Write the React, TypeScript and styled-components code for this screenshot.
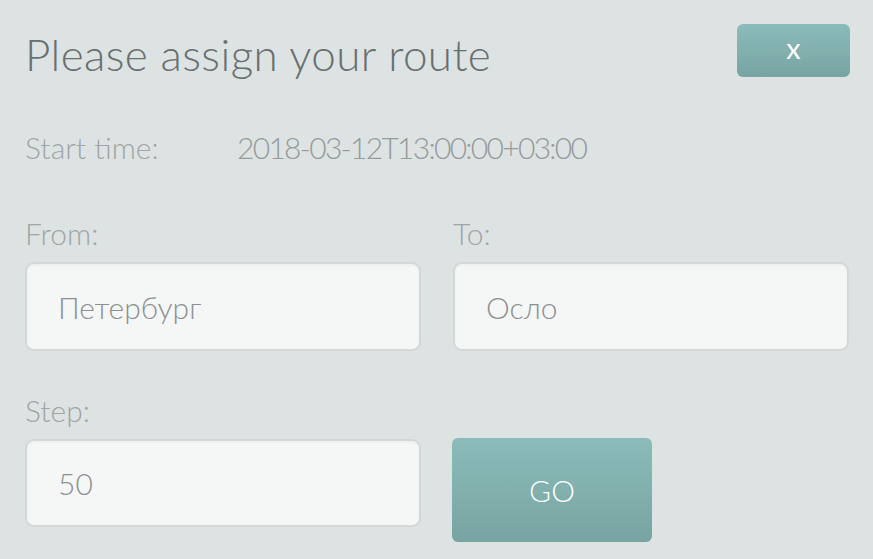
import React from "react";
import styled, { createGlobalStyle } from "styled-components";

const Global = createGlobalStyle`
  html, body {
    margin: 0;
    padding: 0;
    background: #dde3e3;
  }
  body {
    font-family: "Lato", "Open Sans", "Liberation Sans", sans-serif;
    font-weight: 300;
  }
`;

const Page = styled.div`
  box-sizing: border-box;
  width: 873px;
  height: 559px;
  padding: 24px 23px 0 25px;
  background: #dde3e3;
  overflow: hidden;
`;

const Header = styled.div`
  display: flex;
  justify-content: space-between;
  align-items: flex-start;
`;

const Title = styled.h1`
  margin: 4px 0 0 0;
  font-size: 44px;
  line-height: 52px;
  font-weight: 300;
  color: #687070;
  letter-spacing: 0.4px;
`;

const TealButton = styled.button<{ $w: number; $h: number; $fs: number; $weight?: number }>`
  width: ${(p) => p.$w}px;
  height: ${(p) => p.$h}px;
  border: none;
  border-radius: 6px;
  background: linear-gradient(180deg, #8bbcb9 0%, #77a4a2 100%);
  color: #ffffff;
  font-family: "Lato", "Liberation Sans", sans-serif;
  font-size: ${(p) => p.$fs}px;
  font-weight: ${(p) => p.$weight ?? 300};
  padding: 0;
  cursor: pointer;
`;

const StartRow = styled.div`
  display: flex;
  margin-top: 49px;
  font-size: 30px;
  line-height: 36px;
  color: #a0a5a5;
`;

const StartLabel = styled.span`
  width: 212px;
`;

const StartValue = styled.span`
  color: #959a9a;
  letter-spacing: -1.7px;
`;

const Grid = styled.div<{ $mt: number }>`
  display: grid;
  grid-template-columns: 396px 396px;
  column-gap: 32px;
  margin-top: ${(p) => p.$mt}px;
  align-items: end;
`;

const Field = styled.div`
  display: flex;
  flex-direction: column;
`;

const Label = styled.label`
  font-size: 30px;
  line-height: 36px;
  color: #a0a5a5;
  margin-bottom: 11px;
`;

const Input = styled.input<{ $h: number }>`
  box-sizing: border-box;
  width: 396px;
  height: ${(p) => p.$h}px;
  border: 2px solid #d3d7d7;
  border-radius: 9px;
  background: #f5f7f7;
  box-shadow: inset 0 2px 2px rgba(0, 0, 0, 0.03);
  padding: 0 0 0 31px;
  font-family: "Lato", "Liberation Sans", sans-serif;
  font-weight: 300;
  font-size: 30px;
  color: #8c9090;
  outline: none;
`;

const GoWrap = styled.div`
  display: flex;
  align-items: flex-end;
  margin-bottom: -15px;
  margin-left: -1px;
`;

export default function App() {
  return (
    <Page>
      <Global />
      <Header>
        <Title>Please assign your route</Title>
        <TealButton $w={113} $h={53} $fs={21} $weight={600}>
          X
        </TealButton>
      </Header>
      <StartRow>
        <StartLabel>Start time:</StartLabel>
        <StartValue>2018-03-12T13:00:00+03:00</StartValue>
      </StartRow>
      <Grid $mt={50}>
        <Field>
          <Label>From:</Label>
          <Input $h={89} defaultValue="Петербург" />
        </Field>
        <Field>
          <Label>To:</Label>
          <Input $h={89} defaultValue="Осло" />
        </Field>
      </Grid>
      <Grid $mt={41}>
        <Field>
          <Label>Step:</Label>
          <Input $h={88} defaultValue="50" />
        </Field>
        <GoWrap>
          <TealButton $w={200} $h={104} $fs={30}>
            GO
          </TealButton>
        </GoWrap>
      </Grid>
    </Page>
  );
}
